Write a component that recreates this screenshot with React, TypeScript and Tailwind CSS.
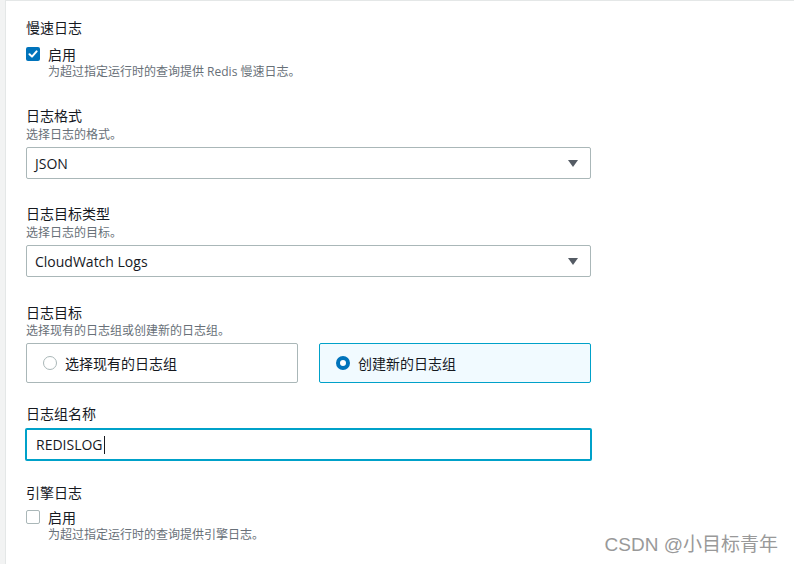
import React from "react";

const font = { fontFamily: '"Open Sans", "Noto Sans CJK SC", sans-serif' };

function Title({ children }: { children: React.ReactNode }) {
  return <div className="text-[14px] leading-[20px] text-[#16191f]">{children}</div>;
}

function Desc({ children }: { children: React.ReactNode }) {
  return <div className="text-[12px] leading-[16px] text-[#687078]">{children}</div>;
}

function Caret() {
  return (
    <svg width="10" height="7" viewBox="0 0 10 7" className="shrink-0">
      <path d="M0 0 H10 L5 7 Z" fill="#545b64" />
    </svg>
  );
}

function Select({ value }: { value: string }) {
  return (
    <div className="mt-[4px] flex h-[32px] w-[565px] items-center justify-between rounded-[2px] border border-[#aab7b8] bg-white pl-[8px] pr-[12px] text-[14px] text-[#16191f]">
      <span>{value}</span>
      <Caret />
    </div>
  );
}

function CheckRow({ checked, desc }: { checked: boolean; desc: string }) {
  return (
    <div className="flex flex-col">
      <div className="flex h-[20px] items-center gap-[8px]">
        {checked ? (
          <div className="flex h-[14px] w-[14px] items-center justify-center rounded-[2px] bg-[#0073bb]">
            <svg width="10" height="10" viewBox="0 0 10 10">
              <path d="M1.5 5.2 L4 7.6 L8.6 2.4" fill="none" stroke="white" strokeWidth="2" strokeLinecap="round" strokeLinejoin="round" />
            </svg>
          </div>
        ) : (
          <div className="h-[14px] w-[14px] rounded-[2px] border border-[#aab7b8] bg-white" />
        )}
        <span className="text-[14px] text-[#16191f]">启用</span>
      </div>
      <div className="pl-[22px]">
        <Desc>{desc}</Desc>
      </div>
    </div>
  );
}

export default function App() {
  return (
    <div className="relative flex h-[564px] w-[794px] overflow-hidden bg-white" style={font}>
      <div className="w-[5px] shrink-0 bg-[#f2f3f3]" />
      <div className="flex-1 border-l border-t border-[#e4e7e7] bg-white pl-[20px] pt-[17px]">
        <div className="flex flex-col">
          <Title>慢速日志</Title>
          <div className="mt-[6px]">
            <CheckRow checked desc="为超过指定运行时的查询提供 Redis 慢速日志。" />
          </div>

          <div className="mt-[26px]">
            <Title>日志格式</Title>
            <div className="mt-[1px]">
              <Desc>选择日志的格式。</Desc>
            </div>
            <Select value="JSON" />
          </div>

          <div className="mt-[25px]">
            <Title>日志目标类型</Title>
            <div className="mt-[1px]">
              <Desc>选择日志的目标。</Desc>
            </div>
            <Select value="CloudWatch Logs" />
          </div>

          <div className="mt-[26px]">
            <Title>日志目标</Title>
            <Desc>选择现有的日志组或创建新的日志组。</Desc>
            <div className="mt-[4px] grid w-[565px] grid-cols-2 gap-[21px]">
              <div className="flex h-[40px] items-center gap-[8px] rounded-[2px] border border-[#aab7b8] bg-white pl-[16px] text-[14px] text-[#16191f]">
                <div className="h-[14px] w-[14px] rounded-full border border-[#aab7b8] bg-white" />
                <span>选择现有的日志组</span>
              </div>
              <div className="flex h-[40px] items-center gap-[8px] rounded-[2px] border border-[#00a1c9] bg-[#f1faff] pl-[16px] text-[14px] text-[#16191f]">
                <div className="h-[14px] w-[14px] rounded-full border-[4px] border-[#0073bb] bg-white" />
                <span>创建新的日志组</span>
              </div>
            </div>
          </div>

          <div className="mt-[21px]">
            <Title>日志组名称</Title>
            <div className="-ml-px mt-[4px] flex h-[33px] w-[567px] items-center rounded-[2px] border-2 border-[#00a1c9] bg-white pl-[9px] text-[14px] text-[#16191f]">
              <span>REDISLOG</span>
              <span className="ml-px inline-block h-[18px] w-px bg-[#16191f]" />
            </div>
          </div>

          <div className="mt-[22px]">
            <Title>引擎日志</Title>
            <div className="mt-[4px]">
              <CheckRow checked={false} desc="为超过指定运行时的查询提供引擎日志。" />
            </div>
          </div>
        </div>
      </div>
      <div className="absolute bottom-[5px] right-[16px] text-[19px] text-[#999999]" style={{ fontFamily: '"Liberation Sans", "Noto Sans CJK SC", sans-serif', textShadow: "0 0 1px rgba(255,255,255,0.9)" }}>
        CSDN @小目标青年
      </div>
    </div>
  );
}
